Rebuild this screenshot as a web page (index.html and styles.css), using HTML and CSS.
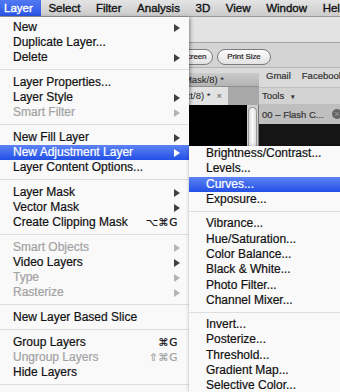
FILE: index.html
```html
<!DOCTYPE html>
<html lang="en">
<head>
  <meta charset="UTF-8">
  <meta name="viewport" content="width=device-width, initial-scale=1.0">
  <title>Layer menu</title>
  <link rel="stylesheet" href="styles.css">
</head>
<body>
  <div class="menubar">
    <span class="title active">Layer</span>
    <span class="title">Select</span>
    <span class="title">Filter</span>
    <span class="title">Analysis</span>
    <span class="title">3D</span>
    <span class="title">View</span>
    <span class="title">Window</span>
    <span class="title">Help</span>
  </div>

  <div class="desktop">
    <div class="ps-toolbar"></div>
    <div class="ps-options">
      <span class="pill fill">Fill Screen</span>
      <span class="pill print">Print Size</span>
    </div>

    <div class="windows">
      <div class="doc-window">
        <div class="strip"></div>
        <div class="doc-title">
          <div class="clip"><span>Untitled-1 (Layer Mask/8) *</span></div>
        </div>
        <div class="doc-tabs">
          <div class="doc-tab">
            <div class="clip"><span>Untitled-2 (Text/8) *</span><span class="x">×</span></div>
          </div>
        </div>
        <div class="canvas">
          <div class="canvas-black"></div>
          <div class="scrollbar"><div class="thumb"></div></div>
        </div>
      </div>
      <div class="browser">
        <div class="bookmarks"><span>Gmail</span><span>Facebook</span></div>
        <div class="tools">Tools <span class="caret">▾</span></div>
        <div class="btab"><span>00 – Flash C...</span><span class="close">×</span></div>
        <div class="page"></div>
      </div>
    </div>

    <!-- dropdowns sit over the windows -->
    <div class="menu main-menu">
      <div class="item sub">New</div>
      <div class="item">Duplicate Layer...</div>
      <div class="item sub">Delete</div>
      <div class="sep"></div>
      <div class="item">Layer Properties...</div>
      <div class="item sub">Layer Style</div>
      <div class="item sub off">Smart Filter</div>
      <div class="sep"></div>
      <div class="item sub">New Fill Layer</div>
      <div class="item sub active">New Adjustment Layer</div>
      <div class="item">Layer Content Options...</div>
      <div class="sep"></div>
      <div class="item sub">Layer Mask</div>
      <div class="item sub">Vector Mask</div>
      <div class="item">Create Clipping Mask <span class="keys">⌥⌘G</span></div>
      <div class="sep"></div>
      <div class="item sub off">Smart Objects</div>
      <div class="item sub">Video Layers</div>
      <div class="item sub off">Type</div>
      <div class="item sub off">Rasterize</div>
      <div class="sep"></div>
      <div class="item">New Layer Based Slice</div>
      <div class="sep"></div>
      <div class="item">Group Layers <span class="keys">⌘G</span></div>
      <div class="item off">Ungroup Layers <span class="keys">⇧⌘G</span></div>
      <div class="item">Hide Layers</div>
      <div class="sep"></div>
    </div>

    <div class="menu submenu">
      <div class="item">Brightness/Contrast...</div>
      <div class="item">Levels...</div>
      <div class="item active">Curves...</div>
      <div class="item">Exposure...</div>
      <div class="sep"></div>
      <div class="item">Vibrance...</div>
      <div class="item">Hue/Saturation...</div>
      <div class="item">Color Balance...</div>
      <div class="item">Black &amp; White...</div>
      <div class="item">Photo Filter...</div>
      <div class="item">Channel Mixer...</div>
      <div class="sep"></div>
      <div class="item">Invert...</div>
      <div class="item">Posterize...</div>
      <div class="item">Threshold...</div>
      <div class="item">Gradient Map...</div>
      <div class="item">Selective Color...</div>
    </div>
  </div>
</body>
</html>
```

FILE: styles.css
```css
* {
  margin: 0;
  padding: 0;
  box-sizing: border-box;
}

body {
  width: 340px;
  height: 392px;
  overflow: hidden;
  font-family: "Liberation Sans", Arial, sans-serif;
  background-color: #d8d8d8;
}

.menubar {
  display: flex;
  height: 17px;
  background: linear-gradient(#e4e4e4, #cbcbcb);
  border-bottom: 1px solid #9a9a9a;
  white-space: nowrap;
}

.menubar .title {
  padding: 0 7.8px;
  font-size: 11.5px;
  line-height: 16px;
  color: #111;
  -webkit-text-stroke: 0.35px #111;
}

.menubar .title:first-child {
  padding-left: 4px;
}

.menubar .title.active {
  background: linear-gradient(#5179f2, #2a55e6);
  color: white;
  -webkit-text-stroke: 0.35px white;
}

.desktop {
  position: relative;
  height: 375px;
  display: flex;
  flex-direction: column;
}

/* background windows */
.ps-toolbar {
  height: 26px;
  background-color: #e3e3e3;
  border-bottom: 1px solid #a3a3a3;
}

.ps-options {
  display: flex;
  gap: 4px;
  height: 25px;
  padding: 6px 0 0 163px;
  background-color: #d4d4d4;
  border-bottom: 1px solid #b4b4b4;
}

.pill {
  height: 16px;
  border: 1px solid #7c7c7c;
  border-radius: 8px;
  background: linear-gradient(#fbfbfb, #e2e2e2);
  font-size: 7.8px;
  line-height: 14px;
  text-align: center;
  white-space: nowrap;
  overflow: hidden;
  color: #222;
  -webkit-text-stroke: 0.2px #222;
}

.pill.fill { width: 50px; }
.pill.print { width: 54px; }

.windows {
  flex: 1;
  display: flex;
}

.doc-window {
  width: 259px;
  display: flex;
  flex-direction: column;
}

.strip {
  height: 5px;
  background-color: #dadada;
}

.clip {
  display: flex;
  justify-content: flex-end;
  margin-left: 189px;
  overflow: hidden;
  white-space: nowrap;
}

.doc-title {
  height: 14px;
  padding-right: 35px;
  background: linear-gradient(#cbcbcb, #b3b3b3);
  border-bottom: 1px solid #8f8f8f;
  font-size: 9.5px;
  line-height: 13px;
  color: #222;
}

.doc-tabs {
  display: flex;
  height: 18px;
  background-color: #a8a8a8;
}

.doc-tab {
  width: 228px;
  padding-right: 6px;
  background-color: #e2e2e2;
  font-size: 9.5px;
  line-height: 17px;
  color: #222;
}

.doc-tab .x {
  margin-left: 6px;
  color: #555;
}

.canvas {
  flex: 1;
  display: flex;
}

.canvas-black {
  flex: 1;
  background-color: #000;
}

.scrollbar {
  width: 12px;
  padding: 2px 1px 0 1px;
  background-color: #cfcfcf;
  border-right: 1px solid #777;
}

.thumb {
  height: 100%;
  border-radius: 5px 5px 0 0;
  background: linear-gradient(90deg, #dcdcdc, #fafafa, #dcdcdc);
  border: 1px solid #9a9a9a;
  border-bottom: none;
}

.browser {
  flex: 1;
  display: flex;
  flex-direction: column;
  white-space: nowrap;
  overflow: hidden;
}

.bookmarks {
  display: flex;
  gap: 11px;
  height: 19px;
  padding: 2px 0 0 7px;
  background-color: #dadada;
  font-size: 9.5px;
  line-height: 12px;
  color: #333;
  -webkit-text-stroke: 0.2px #333;
}

.tools {
  height: 17px;
  padding-left: 3px;
  background-color: #d2d2d2;
  border-top: 1px solid #bdbdbd;
  font-size: 9.5px;
  line-height: 16px;
  color: #333;
  -webkit-text-stroke: 0.2px #333;
}

.tools .caret {
  margin-left: 4px;
  font-size: 7px;
}

.btab {
  display: flex;
  align-items: center;
  justify-content: space-between;
  height: 20px;
  padding-left: 3px;
  background-color: #bfbfbf;
  font-size: 9.5px;
  color: #333;
  -webkit-text-stroke: 0.2px #333;
}

.btab .close {
  width: 10px;
  height: 10px;
  margin-right: -2px;
  border-radius: 50%;
  background-color: #666;
  color: #ddd;
  font-size: 9px;
  line-height: 10px;
  text-align: center;
}

.page {
  flex: 1;
  background-color: #151515;
}

/* menus */
.menu {
  position: absolute;
  background-color: #f9f9f9;
  box-shadow: 1px 1px 4px rgba(0, 0, 0, 0.45);
}

.main-menu {
  top: 0;
  left: 0;
  width: 189px;
  height: 380px;
  padding-top: 3px;
}

.submenu {
  top: 129px;
  left: 189px;
  width: 160px;
  height: 260px;
}

.item {
  display: flex;
  align-items: center;
  height: 15px;
  padding: 0 9px 0 13px;
  font-size: 12px;
  line-height: 15px;
  white-space: nowrap;
  color: #111;
  -webkit-text-stroke: 0.2px #111;
}

.submenu .item {
  height: 15.3px;
  padding-left: 17px;
}

.item.sub::after {
  content: "";
  margin-left: auto;
  border-left: 6px solid #404040;
  border-top: 4px solid transparent;
  border-bottom: 4px solid transparent;
}

.item.off {
  color: #a2a2a2;
  -webkit-text-stroke: 0.2px #a2a2a2;
}

.item.off::after {
  border-left-color: #b4b4b4;
}

.item.active {
  background: linear-gradient(#5d83f4, #2350e6);
  color: white;
  -webkit-text-stroke: 0.2px white;
}

.item.active::after {
  border-left-color: white;
}

.keys {
  margin-left: auto;
  margin-right: 2px;
  font-family: "DejaVu Sans", sans-serif;
  font-size: 10.5px;
  letter-spacing: 0.5px;
}

.sep {
  height: 10px;
  padding-top: 4px;
}

.sep::before {
  content: "";
  display: block;
  height: 1px;
  background-color: #dedede;
}

.submenu .sep {
  height: 9px;
}
```
